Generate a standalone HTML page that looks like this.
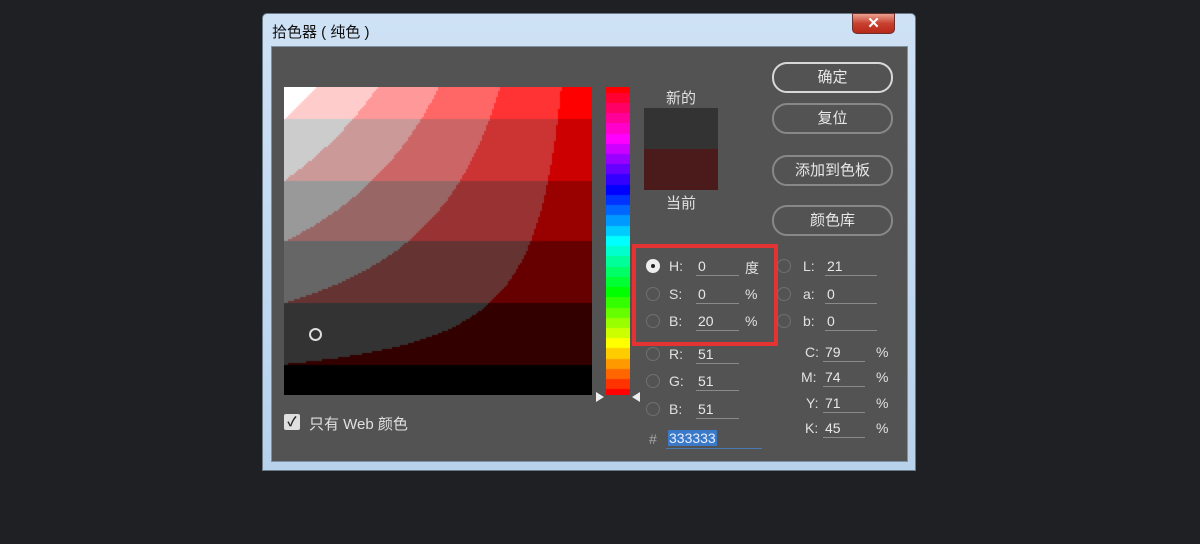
<!DOCTYPE html>
<html><head><meta charset="utf-8"><style>
*{margin:0;padding:0;box-sizing:border-box}
body{width:1200px;height:544px;background:#1e2023;position:relative;overflow:hidden;font-family:"Liberation Sans","Noto Sans CJK SC",sans-serif;color:#d8d8d8}
.win{position:absolute;left:262px;top:13px;width:654px;height:458px;background:linear-gradient(#cfe2f5,#b8d2ec);border:1px solid #6a7a8a;border-radius:5px 5px 0 0}
.title{position:absolute;left:9px;top:7px;font-size:15px;color:#111}
.close{position:absolute;left:589px;top:-1px;width:43px;height:21px;border-radius:0 0 5px 5px;background:linear-gradient(#e8a090,#c8402f 50%,#b82818);border:1px solid #6a3030;color:#fff;font-weight:bold;text-align:center;font-size:15px;line-height:19px}
.inner{position:absolute;left:8px;top:32px;width:637px;height:416px;background:#535353;border:1px solid #8090a0}
.abs{position:absolute}
canvas{position:absolute}
.btn{position:absolute;left:500px;width:121px;height:31px;border:2px solid #888;border-radius:15px;text-align:center;font-size:15px;line-height:27px;color:#e8e8e8}
.rad{position:absolute;width:14px;height:14px;border:1px solid #707070;border-radius:50%}
.lbl{position:absolute;font-size:14px;color:#e0e0e0}
.inp{position:absolute;height:19px;border-bottom:1px solid #8a8a8a;font-size:14px;color:#e8e8e8;padding-left:2px;line-height:19px}
</style></head><body>
<div class="win">
<div class="title">拾色器 ( 纯色 )</div>
<div class="close">✕</div>
<div class="inner">
<canvas id="f" width="308" height="308" style="left:12px;top:40px"></canvas>
<div class="abs" style="left:37px;top:281px;width:13px;height:13px;border:2px solid #ddd;border-radius:50%"></div>
<canvas id="h" width="24" height="308" style="left:334px;top:40px"></canvas>
<div class="abs" style="left:324px;top:345px;width:0;height:0;border-top:5px solid transparent;border-bottom:5px solid transparent;border-left:8px solid #eee"></div>
<div class="abs" style="left:360px;top:345px;width:0;height:0;border-top:5px solid transparent;border-bottom:5px solid transparent;border-right:8px solid #eee"></div>
<div class="lbl" style="left:394px;top:40px;font-size:15px">新的</div>
<div class="abs" style="left:372px;top:61px;width:74px;height:41px;background:#333"></div>
<div class="abs" style="left:372px;top:102px;width:74px;height:41px;background:#4b1a1a"></div>
<div class="lbl" style="left:394px;top:145px;font-size:15px">当前</div>
<div class="btn" style="top:15px;border-color:#d8d8d8">确定</div>
<div class="btn" style="top:56px">复位</div>
<div class="btn" style="top:108px">添加到色板</div>
<div class="btn" style="top:158px">颜色库</div>
<div class="abs" style="left:360px;top:197px;width:146px;height:102px;border:4px solid #e43333"></div>
<div class="rad" style="left:374px;top:212px;background:#eee;border-color:#eee"><div style="position:absolute;left:4px;top:4px;width:4px;height:4px;background:#222;border-radius:50%"></div></div>
<div class="rad" style="left:374px;top:240px"></div>
<div class="rad" style="left:374px;top:267px"></div>
<div class="rad" style="left:374px;top:300px"></div>
<div class="rad" style="left:374px;top:327px"></div>
<div class="rad" style="left:374px;top:355px"></div>
<div class="lbl" style="left:397px;top:211px">H:</div>
<div class="lbl" style="left:397px;top:239px">S:</div>
<div class="lbl" style="left:397px;top:266px">B:</div>
<div class="lbl" style="left:397px;top:299px">R:</div>
<div class="lbl" style="left:397px;top:326px">G:</div>
<div class="lbl" style="left:397px;top:354px">B:</div>
<div class="inp" style="left:424px;top:210px;width:43px">0</div>
<div class="inp" style="left:424px;top:238px;width:43px">0</div>
<div class="inp" style="left:424px;top:265px;width:43px">20</div>
<div class="inp" style="left:424px;top:298px;width:43px">51</div>
<div class="inp" style="left:424px;top:325px;width:43px">51</div>
<div class="inp" style="left:424px;top:353px;width:43px">51</div>
<div class="lbl" style="left:473px;top:211px">度</div>
<div class="lbl" style="left:473px;top:239px">%</div>
<div class="lbl" style="left:473px;top:266px">%</div>
<div class="lbl" style="left:377px;top:384px;color:#aaa">#</div>
<div class="abs" style="left:394px;top:381px;width:96px;height:21px;border-bottom:1px solid #4a78b0"></div>
<div class="abs" style="left:396px;top:383px;background:#3a78c8;color:#e8f0ff;font-size:14px;line-height:16px;padding:0 1px">333333</div>
<div class="rad" style="left:505px;top:212px"></div>
<div class="rad" style="left:505px;top:240px"></div>
<div class="rad" style="left:505px;top:267px"></div>
<div class="lbl" style="left:531px;top:211px">L:</div>
<div class="lbl" style="left:531px;top:239px">a:</div>
<div class="lbl" style="left:531px;top:266px">b:</div>
<div class="inp" style="left:553px;top:210px;width:52px">21</div>
<div class="inp" style="left:553px;top:238px;width:52px">0</div>
<div class="inp" style="left:553px;top:265px;width:52px">0</div>
<div class="lbl" style="left:533px;top:297px">C:</div>
<div class="lbl" style="left:529px;top:322px">M:</div>
<div class="lbl" style="left:534px;top:348px">Y:</div>
<div class="lbl" style="left:533px;top:373px">K:</div>
<div class="inp" style="left:551px;top:296px;width:42px">79</div>
<div class="inp" style="left:551px;top:321px;width:42px">74</div>
<div class="inp" style="left:551px;top:347px;width:42px">71</div>
<div class="inp" style="left:551px;top:372px;width:42px">45</div>
<div class="lbl" style="left:604px;top:297px">%</div>
<div class="lbl" style="left:604px;top:322px">%</div>
<div class="lbl" style="left:604px;top:348px">%</div>
<div class="lbl" style="left:604px;top:373px">%</div>
<div class="abs" style="left:12px;top:367px;width:16px;height:16px;background:#e0e0e0;border-radius:2px;color:#222;font-size:13px;line-height:16px;text-align:center;font-weight:bold">✓</div>
<div class="lbl" style="left:37px;top:366px;font-size:15px">只有 Web 颜色</div>
</div>
</div>
<script>
function q(v){return Math.round(v/51)*51}
var c=document.getElementById('f').getContext('2d');
for(var y=0;y<308;y+=2)for(var x=0;x<308;x+=2){var s=x/307,v=1-y/307;var r=q(255*v),g=q(255*v*(1-s));c.fillStyle='rgb('+r+','+g+','+g+')';c.fillRect(x,y,2,2);}
var h=document.getElementById('h').getContext('2d');
for(var y=0;y<308;y++){var t=(y/307)*6,i=Math.floor(t)%6,f=t-Math.floor(t),R,G,B;
switch(i){case 0:R=1;G=0;B=f;break;case 1:R=1-f;G=0;B=1;break;case 2:R=0;G=f;B=1;break;case 3:R=0;G=1;B=1-f;break;case 4:R=f;G=1;B=0;break;default:R=1;G=1-f;B=0;}
if(y>=307){R=1;G=0;B=0}
h.fillStyle='rgb('+q(R*255)+','+q(G*255)+','+q(B*255)+')';h.fillRect(0,y,24,1);}
</script>
</body></html>
